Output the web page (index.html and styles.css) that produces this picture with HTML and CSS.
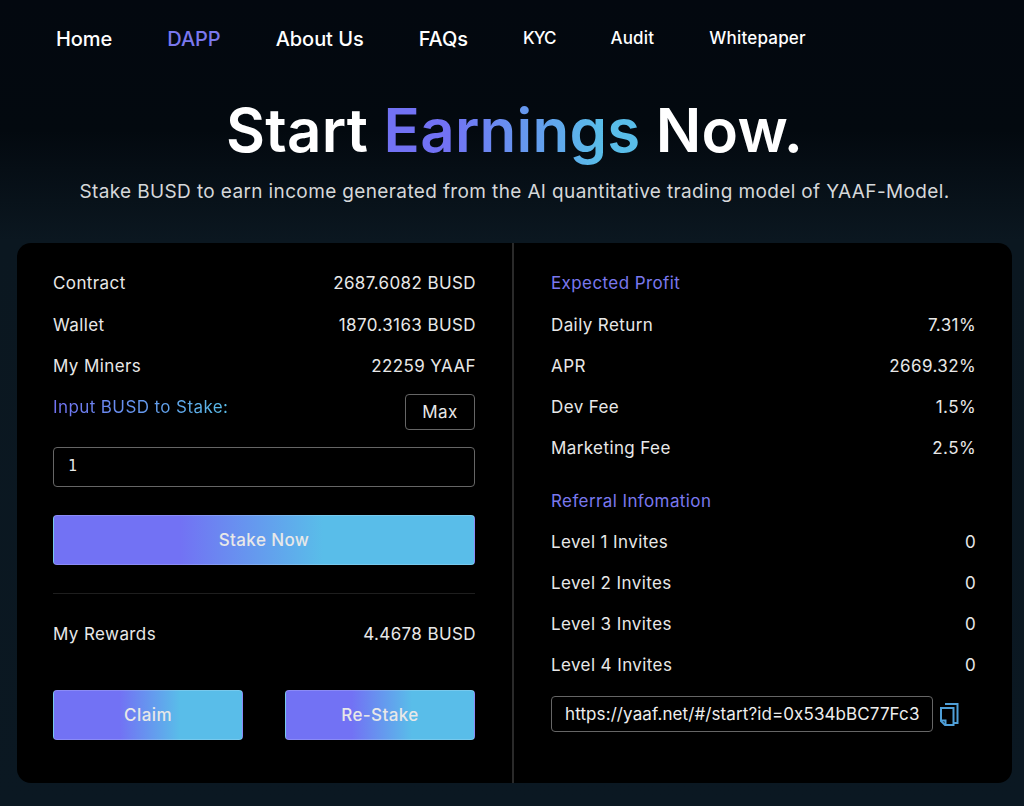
FILE: index.html
```html
<!DOCTYPE html>
<html lang="en">
<head>
<meta charset="utf-8">
<title>Start Earnings Now</title>
<link rel="stylesheet" href="styles.css">
</head>
<body>
<nav class="nav">
  <a class="nav-big">Home</a>
  <a class="nav-big nav-active">DAPP</a>
  <a class="nav-big">About Us</a>
  <a class="nav-big">FAQs</a>
  <a class="nav-small nav-kyc">KYC</a>
  <a class="nav-small">Audit</a>
  <a class="nav-small">Whitepaper</a>
</nav>
<header class="hero">
  <h1 class="title">Start <span class="grad-text">Earnings</span> Now.</h1>
  <p class="sub">Stake BUSD to earn income generated from the AI quantitative trading model of YAAF-Model.</p>
</header>
<main class="card">
  <section class="col col-left">
    <div class="row row-first"><span>Contract</span><span class="val">2687.6082 BUSD</span></div>
    <div class="row"><span>Wallet</span><span class="val">1870.3163 BUSD</span></div>
    <div class="row"><span>My Miners</span><span class="val">22259 YAAF</span></div>
    <div class="row row-input">
      <span class="grad-label">Input BUSD to Stake:</span>
      <button class="max">Max</button>
    </div>
    <div class="input">1</div>
    <button class="btn btn-stake">Stake Now</button>
    <hr class="sep">
    <div class="row row-rewards"><span>My Rewards</span><span class="val">4.4678 BUSD</span></div>
    <div class="actions">
      <button class="btn btn-small">Claim</button>
      <button class="btn btn-small">Re-Stake</button>
    </div>
  </section>
  <section class="col col-right">
    <div class="row row-first heading"><span>Expected Profit</span></div>
    <div class="row"><span>Daily Return</span><span class="val">7.31%</span></div>
    <div class="row"><span>APR</span><span class="val">2669.32%</span></div>
    <div class="row"><span>Dev Fee</span><span class="val">1.5%</span></div>
    <div class="row"><span>Marketing Fee</span><span class="val">2.5%</span></div>
    <div class="row heading heading-ref"><span>Referral Infomation</span></div>
    <div class="row"><span>Level 1 Invites</span><span class="val">0</span></div>
    <div class="row"><span>Level 2 Invites</span><span class="val">0</span></div>
    <div class="row"><span>Level 3 Invites</span><span class="val">0</span></div>
    <div class="row"><span>Level 4 Invites</span><span class="val">0</span></div>
    <div class="link-row">
      <div class="link">https://yaaf.net/#/start?id=0x534bBC77Fc3</div>
      <svg class="copy" width="20" height="24" viewBox="0 0 20 24" fill="none" stroke="#4f9fd8" stroke-width="2">
        <path d="M6 2h12.500v19H15"/>
        <path d="M2 6h12.500v17H6l-4-4z"/>
        <path d="M2.500 18.500H6.500V23"/>
      </svg>
    </div>
  </section>
</main>
</body>
</html>
```
FILE: styles.css
```css
* { box-sizing: border-box; }
html, body { margin: 0; height: 100%; }
body {
  width: 1024px;
  height: 806px;
  overflow: hidden;
  background: linear-gradient(180deg, #03080f 0, #03090f 130px, #0b1720 240px, #0b1822 806px);
  color: #e8e8e8;
  font-family: Inter, "Liberation Sans", sans-serif;
  font-size: 17px;
  letter-spacing: 0.4px;
}
.nav {
  display: flex;
  align-items: center;
  gap: 55px;
  height: 78px;
  padding-left: 56px;
  color: #fff;
}
.nav-big { font-size: 20px; font-weight: 500; letter-spacing: -0.05px; }
.nav-small { font-size: 17px; font-weight: 500; margin-top: -3px; letter-spacing: 0.2px; }
.nav-kyc { letter-spacing: -1px; }
.nav-active { color: #7a78ee; }
.hero { height: 165px; padding: 16px 0 0 5px; text-align: center; }
.title {
  margin: 0;
  font-size: 60px;
  line-height: 72px;
  font-weight: 600;
  color: #fff;
  letter-spacing: 0.25px;
}
.grad-text {
  background: linear-gradient(90deg, #7272f4 0, #7272f4 25%, #59bde9 85%);
  -webkit-background-clip: text;
  background-clip: text;
  color: transparent;
}
.sub { margin: 14px 0 0; font-size: 19px; line-height: 24px; color: #d6d8da; letter-spacing: 0.37px; }
.card {
  display: flex;
  width: 995px;
  height: 540px;
  margin-left: 17px;
  background: #000;
  border-radius: 14px;
}
.col-left { width: 497px; padding: 19px 37px 0 36px; border-right: 2px solid #2a2a2a; }
.col-right { flex: 1; padding: 19px 37px 0 37px; }
.row {
  display: flex;
  justify-content: space-between;
  align-items: center;
  height: 41px;
}
.row-first { height: 42px; padding-bottom: 1px; }
.val { margin-right: -1px; }
.row-input { align-items: flex-start; padding-top: 11px; }
.grad-label {
  background: linear-gradient(90deg, #7272f4, #59bde9);
  -webkit-background-clip: text;
  background-clip: text;
  color: transparent;
}
.max {
  width: 70px;
  height: 36px;
  margin-top: -3px;
  background: #000;
  border: 1px solid #666;
  border-radius: 4px;
  color: #e8e8e8;
  font: inherit;
  letter-spacing: inherit;
}
.input {
  height: 40px;
  margin-top: 20px;
  padding-left: 14px;
  border: 1px solid #666;
  border-radius: 4px;
  font-family: "DejaVu Sans Mono", monospace;
  font-size: 15px;
  line-height: 36px;
}
.btn {
  display: block;
  height: 50px;
  border: 1px solid rgba(255, 255, 255, 0.18);
  border-radius: 4px;
  color: #e8e8e8;
  font: inherit;
  font-weight: 500;
  letter-spacing: inherit;
}
.btn-stake {
  width: 100%;
  margin-top: 28px;
  background: linear-gradient(90deg, #7272f4 30%, #59bde9 64%);
}
.sep { margin: 28px 0 0; border: 0; border-top: 1px solid #1e1e1e; }
.row-rewards { margin-top: 19px; }
.actions { display: flex; justify-content: space-between; margin-top: 36px; }
.btn-small {
  width: 190px;
  background: linear-gradient(90deg, #7272f4 35%, #59bde9 67%);
}
.heading { color: #7a78ee; }
.heading-ref { margin-top: 12px; }
.link-row { display: flex; align-items: center; gap: 6px; margin-top: 11px; }
.link {
  width: 382px;
  height: 36px;
  padding-left: 13px;
  border: 1px solid #666;
  border-radius: 4px;
  line-height: 34px;
  white-space: nowrap;
  overflow: hidden;
  color: #eee;
  letter-spacing: 0.1px;
}
.copy { display: block; }
```
